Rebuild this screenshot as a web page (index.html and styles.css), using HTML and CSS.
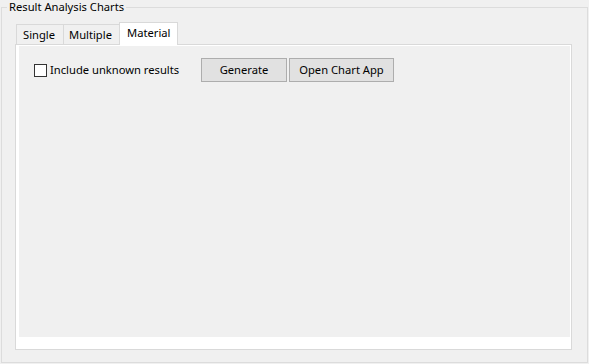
FILE: index.html
```html
<!DOCTYPE html>
<html>
<head>
<meta charset="utf-8">
<link rel="stylesheet" href="styles.css">
</head>
<body>
<div class="group">
  <div class="group-title">Result Analysis Charts</div>
  <div class="tabs">
    <div class="tab tab-first">Single</div>
    <div class="tab tab-second">Multiple</div>
    <div class="tab tab-active">Material</div>
  </div>
  <div class="panel">
    <div class="page">
      <div class="toolbar">
        <label class="check">
          <span class="box"></span>
          <span class="check-text">Include unknown results</span>
        </label>
        <div class="buttons">
          <button class="btn btn-generate">Generate</button>
          <button class="btn btn-open">Open Chart App</button>
        </div>
      </div>
    </div>
  </div>
</div>
</body>
</html>
```
FILE: styles.css
```css
html, body {
  margin: 0;
  padding: 0;
  background: #f0f0f0;
}
body {
  font-family: "Noto Sans", "Liberation Sans", sans-serif;
  font-size: 11.2px;
  line-height: 14px;
  color: #000;
  width: 589px;
  height: 364px;
  overflow: hidden;
}
.group {
  margin: 7px 1px 0 1px;
  border: 1px solid #dcdcdc;
  height: 354px;
  box-sizing: content-box;
}
.group-title {
  display: block;
  width: max-content;
  margin: -8px 0 0 5px;
  padding: 0 2px;
  background: #f0f0f0;
  line-height: 14px;
  height: 14px;
}
.tabs {
  display: flex;
  align-items: flex-end;
  margin: 8px 0 0 14px;
  height: 22px;
  position: relative;
  z-index: 1;
}
.tab {
  box-sizing: border-box;
  height: 20px;
  border: 1px solid #d9d9d9;
  border-bottom: none;
  border-left: none;
  background: #f0f0f0;
  line-height: 18px;
  padding: 1px 0 0 6px;
}
.tab-first {
  border-left: 1px solid #d9d9d9;
  width: 48px;
}
.tab-second {
  width: 57px;
  padding-left: 5px;
}
.tab-active {
  height: 23px;
  width: 59px;
  margin-left: -2px;
  margin-bottom: -1px;
  border-left: 1px solid #d9d9d9;
  background: #fff;
  line-height: 18px;
  padding: 1px 0 0 7px;
}
.panel {
  margin-left: 13px;
  width: 557px;
  height: 306px;
  box-sizing: border-box;
  border: 1px solid #d9d9d9;
  background: #fff;
  padding: 1px 1px 12px 3px;
}
.page {
  background: #f0f0f0;
  height: 100%;
}
.toolbar {
  display: flex;
  align-items: center;
  padding: 12px 0 0 15px;
}
.check {
  display: flex;
  align-items: center;
  width: 167px;
}
.box {
  width: 13px;
  height: 13px;
  box-sizing: border-box;
  border: 1px solid #333;
  background: #fff;
  margin-right: 3px;
}
.buttons {
  display: flex;
  gap: 2px;
}
.btn {
  font-family: inherit;
  font-size: 11.2px;
  color: #000;
  height: 24px;
  box-sizing: border-box;
  border: 1px solid #adadad;
  background: #e1e1e1;
  padding: 0 0 1px 0;
  margin: 0;
}
.btn-generate { width: 86px; }
.btn-open { width: 105px; }
```
